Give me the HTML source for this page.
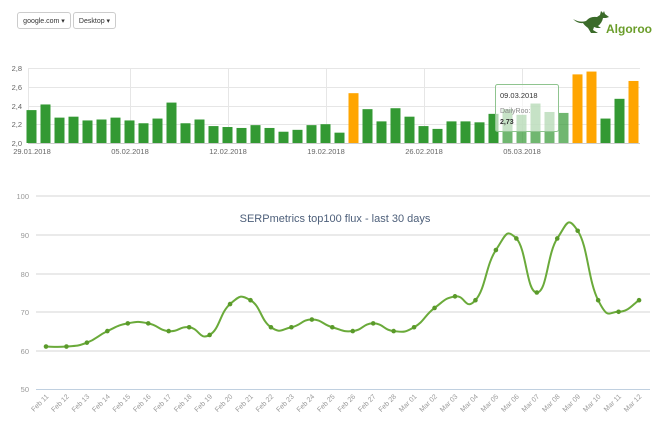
<!DOCTYPE html>
<html><head><meta charset="utf-8"><style>
html,body{margin:0;padding:0;background:#fff;width:665px;height:444px;overflow:hidden;font-family:"Liberation Sans",sans-serif;}
.btn{position:absolute;top:12px;height:17px;border:1px solid #ccc;border-radius:3px;font-size:7px;color:#333;line-height:17px;text-align:center;background:#fff;box-sizing:border-box}
</style></head><body>
<div class="btn" style="left:17px;width:54px">google.com ▾</div>
<div class="btn" style="left:73px;width:43px">Desktop ▾</div>
<svg width="665" height="444" style="position:absolute;left:0;top:0" id="s">
<g fill="#3b6b2a">
<path d="M573 19 Q580 23 586 21 Q590 16 597 17 L600 15 L601 11 L603 13 L604 11 L605 14 L609 17 L606 18 L603 18 Q602 23 598 26 L601 28 L597 28 L594 27 L593 30 L598 33 L591 33 L588 28 Q584 25 583 23 Q578 24 573 19 Z"/>
</g>
<text x="606" y="33" font-size="12" font-weight="bold" fill="#6a9d2a" font-family="Liberation Sans,sans-serif">Algoroo</text>
<g stroke="#e6e6e6" stroke-width="1">
<line x1="28" y1="68.5" x2="640" y2="68.5"/><line x1="28" y1="87.5" x2="640" y2="87.5"/>
<line x1="28" y1="106.5" x2="640" y2="106.5"/><line x1="28" y1="124.5" x2="640" y2="124.5"/>
<line x1="130.5" y1="68" x2="130.5" y2="143"/><line x1="228.5" y1="68" x2="228.5" y2="143"/>
<line x1="326.5" y1="68" x2="326.5" y2="143"/><line x1="424.5" y1="68" x2="424.5" y2="143"/>
<line x1="522.5" y1="68" x2="522.5" y2="143"/><line x1="28.5" y1="68" x2="28.5" y2="143"/>
</g>
<g font-size="7.5" fill="#666" text-anchor="end">
<text x="22" y="71">2,8</text><text x="22" y="90">2,6</text><text x="22" y="109">2,4</text><text x="22" y="127">2,2</text><text x="22" y="146">2,0</text>
</g>
<g id="bars"></g>
<line x1="28" y1="143.5" x2="640" y2="143.5" stroke="#ccc"/>
<g font-size="7.5" fill="#666" text-anchor="middle">
<text x="32" y="154">29.01.2018</text><text x="130" y="154">05.02.2018</text><text x="228" y="154">12.02.2018</text><text x="326" y="154">19.02.2018</text><text x="424" y="154">26.02.2018</text><text x="522" y="154">05.03.2018</text>
</g>
<rect x="495.5" y="84.5" width="63" height="47" fill="#fff" fill-opacity="0.6" stroke="#8fc48f" rx="2"/>
<text x="500" y="98" font-size="7.5" fill="#333">09.03.2018</text>
<text x="500" y="113" font-size="7" fill="#888">DailyRoo:</text>
<text x="500" y="124" font-size="7" font-weight="bold" fill="#333">2,73</text>
<g stroke="#e3e3e3" stroke-width="1.5">
<line x1="36" y1="196" x2="650" y2="196"/><line x1="36" y1="235" x2="650" y2="235"/><line x1="36" y1="274" x2="650" y2="274"/><line x1="36" y1="312" x2="650" y2="312"/><line x1="36" y1="351" x2="650" y2="351"/>
</g>
<line x1="36" y1="389.5" x2="650" y2="389.5" stroke="#c0d0e0"/>
<g font-size="7.5" fill="#999" text-anchor="end">
<text x="29" y="199">100</text><text x="29" y="238">90</text><text x="29" y="277">80</text><text x="29" y="315">70</text><text x="29" y="354">60</text><text x="29" y="392">50</text>
</g>
<text x="335" y="222" font-size="11" fill="#4d5f7a" text-anchor="middle">SERPmetrics top100 flux - last 30 days</text>
<path id="ln" fill="none" stroke="#6aaa3a" stroke-width="2"/>
<g id="pts" fill="#5a9a2a"></g>
<g id="xl" font-size="7" fill="#999"></g>
</svg>
<script>
var bv=[2.35,2.41,2.27,2.28,2.24,2.25,2.27,2.24,2.21,2.26,2.43,2.21,2.25,2.18,2.17,2.16,2.19,2.16,2.12,2.14,2.19,2.20,2.11,2.53,2.36,2.23,2.37,2.28,2.18,2.15,2.23,2.23,2.22,2.31,2.36,2.30,2.42,2.33,2.32,2.73,2.76,2.26,2.47,2.66];
var g=document.getElementById('bars'),h='';
bv.forEach(function(v,i){var x=26.5+i*14.0,y=143-(v-2)*94;var c=v>2.5?'#ffa500':'#339933';var op=(i>=34&&i<=38)?' fill-opacity="0.7"':'';h+='<rect x="'+x+'" y="'+y+'" width="10" height="'+(143-y)+'" fill="'+c+'"'+op+'/>';});
g.innerHTML=h;
var lv=[61,61,62,65,67,67,65,66,64,72,73,66,66,68,66,65,67,65,66,71,74,73,86,89,75,89,91,73,70,73];
var P=lv.map(function(v,i){return [46+i*20.45,389-(v-50)*3.86];});
var d='M'+P[0][0]+' '+P[0][1];
for(var i=0;i<P.length-1;i++){var p0=P[i-1]||P[i],p1=P[i],p2=P[i+1],p3=P[i+2]||p2;var t=0.25;
d+=' C'+(p1[0]+(p2[0]-p0[0])*t)+' '+(p1[1]+(p2[1]-p0[1])*t)+' '+(p2[0]-(p3[0]-p1[0])*t)+' '+(p2[1]-(p3[1]-p1[1])*t)+' '+p2[0]+' '+p2[1];}
document.getElementById('ln').setAttribute('d',d);
var ph='',xh='';
var lab=[];for(var k=11;k<=28;k++)lab.push('Feb '+k);for(k=1;k<=12;k++)lab.push('Mar '+(k<10?'0'+k:k));
P.forEach(function(p,i){ph+='<circle cx="'+p[0]+'" cy="'+p[1]+'" r="2.3"/>';
var x=p[0]+3,y=397;xh+='<text x="'+x+'" y="'+y+'" text-anchor="end" transform="rotate(-45 '+x+' '+y+')">'+lab[i]+'</text>';});
document.getElementById('pts').innerHTML=ph;document.getElementById('xl').innerHTML=xh;
</script>
</body></html>
